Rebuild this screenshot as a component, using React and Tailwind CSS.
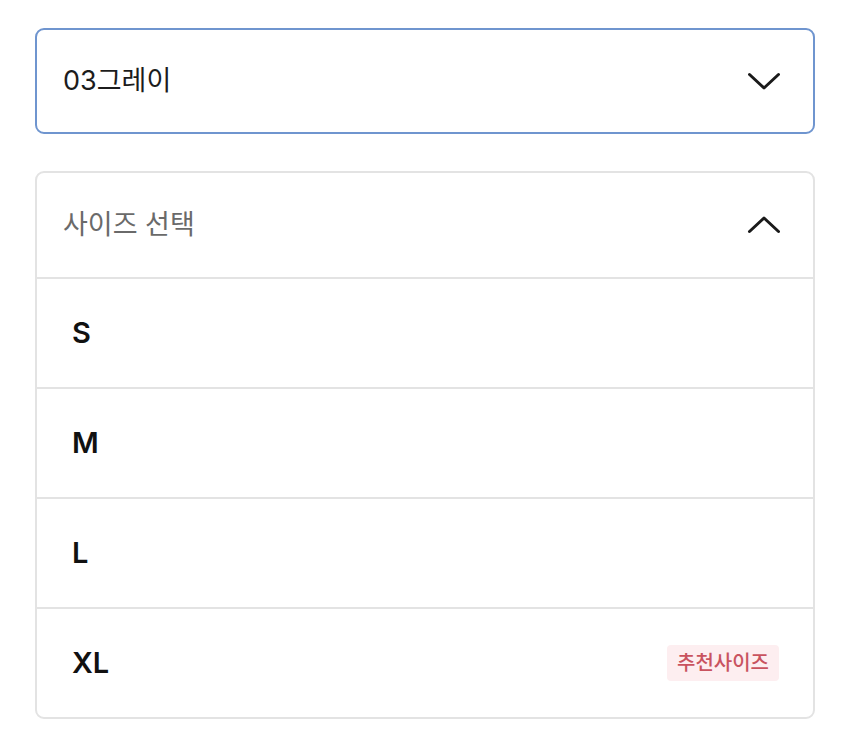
import React, { useState } from "react";

const font = { fontFamily: "Inter, 'Noto Sans CJK KR', sans-serif" };

const Chevron = ({ up }) => (
  <svg width="34" height="20" viewBox="0 0 34 20" fill="none">
    <path
      d={up ? "M2.5 16.5 L17 3 L31.5 16.5" : "M2.5 3.5 L17 17 L31.5 3.5"}
      stroke="#1a1a1a"
      strokeWidth="3"
      strokeLinecap="round"
      strokeLinejoin="round"
    />
  </svg>
);

const sizes = [
  { label: "S" },
  { label: "M" },
  { label: "L" },
  { label: "XL", recommended: true },
];

export default function App() {
  const [open, setOpen] = useState(true);

  return (
    <div className="w-[850px] h-[741px] bg-white pt-[28px] px-[35px]" style={font}>
      <div className="h-[106px] border-2 border-[#6f95cf] rounded-[9px] flex items-center justify-between pl-[26px] pr-[32px]">
        <span className="text-[27px] text-[#1c1c1c]">03그레이</span>
        <Chevron />
      </div>

      <div className="mt-[37px] border-2 border-[#e3e3e3] rounded-[9px]">
        <button
          onClick={() => setOpen(!open)}
          className="w-full h-[104px] flex items-center justify-between pl-[26px] pr-[32px]"
        >
          <span className="text-[27px] text-[#6a6a6a]">사이즈 선택</span>
          <Chevron up={open} />
        </button>
        {open &&
          sizes.map((s) => (
            <div
              key={s.label}
              className="h-[110px] border-t-2 border-[#e3e3e3] flex items-center justify-between pl-[35px] pr-[34px]"
            >
              <span className="text-[29px] font-semibold text-[#111]">{s.label}</span>
              {s.recommended && (
                <span className="h-[36px] px-[10px] flex items-center rounded-[4px] bg-[#fdeef0] text-[#c9535f] text-[20px] font-medium">
                  추천사이즈
                </span>
              )}
            </div>
          ))}
      </div>
    </div>
  );
}
